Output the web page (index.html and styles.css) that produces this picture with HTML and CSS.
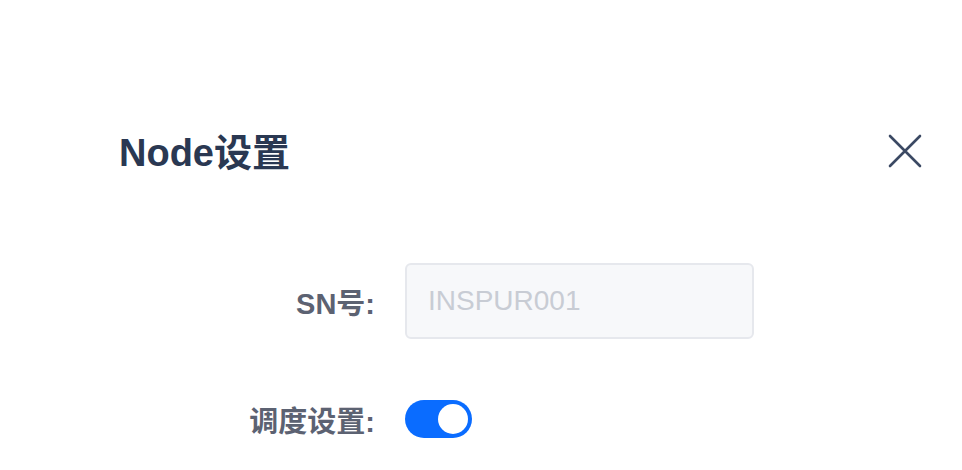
FILE: index.html
```html
<!DOCTYPE html>
<html lang="zh-CN">
<head>
  <meta charset="UTF-8" />
  <meta name="viewport" content="width=device-width, initial-scale=1.0"/>
  <title>Node设置</title>
  <link rel="stylesheet" href="styles.css">
</head>
<body>
  <div class="dialog">
    <div class="dialog-header">
      <h2 class="dialog-title">Node设置</h2>
      <button class="close-btn" aria-label="关闭">
        <svg width="34" height="34" viewBox="0 0 34 34">
          <path d="M2 2 L32 32 M32 2 L2 32" stroke="#3b4963" stroke-width="2.6" stroke-linecap="round" fill="none"/>
        </svg>
      </button>
    </div>
    <form class="form">
      <div class="form-row">
        <label class="form-label">SN号:</label>
        <input class="form-input" type="text" placeholder="INSPUR001" disabled>
      </div>
      <div class="form-row switch-row">
        <label class="form-label">调度设置:</label>
        <span class="switch on"><span class="knob"></span></span>
      </div>
    </form>
  </div>
</body>
</html>
```

FILE: styles.css
```css
body {
  margin: 0;
  background: #fff;
  font-family: "Liberation Sans", "Noto Sans CJK SC", sans-serif;
}
.dialog {
  padding: 125px 40px 0 119px;
}
.dialog-header {
  display: flex;
  justify-content: space-between;
  align-items: center;
  height: 48px;
}
.dialog-title {
  margin: 0;
  font-size: 38px;
  font-weight: bold;
  color: #2a3852;
}
.close-btn {
  background: none;
  border: none;
  padding: 0;
  margin-top: 3px;
  width: 34px;
  height: 34px;
  cursor: pointer;
}
.form {
  margin-top: 90px;
}
.form-row {
  display: flex;
  align-items: center;
  gap: 30px;
}
.form-label {
  width: 256px;
  text-align: right;
  font-size: 29px;
  font-weight: bold;
  color: #5c6272;
}
.form-input {
  width: 349px;
  height: 76px;
  box-sizing: border-box;
  padding: 0 21px;
  font-size: 28px;
  font-family: inherit;
  background: #f7f8fa;
  border: 2px solid #e6e8ed;
  border-radius: 6px;
}
.form-input::placeholder {
  color: #c8ccd4;
}
.switch-row {
  margin-top: 59px;
}
.switch {
  display: flex;
  align-items: center;
  justify-content: flex-end;
  width: 67px;
  height: 38px;
  box-sizing: border-box;
  padding: 0 4px;
  border-radius: 19px;
  background: #0a6cff;
}
.knob {
  width: 30px;
  height: 30px;
  border-radius: 50%;
  background: #fff;
}
```
